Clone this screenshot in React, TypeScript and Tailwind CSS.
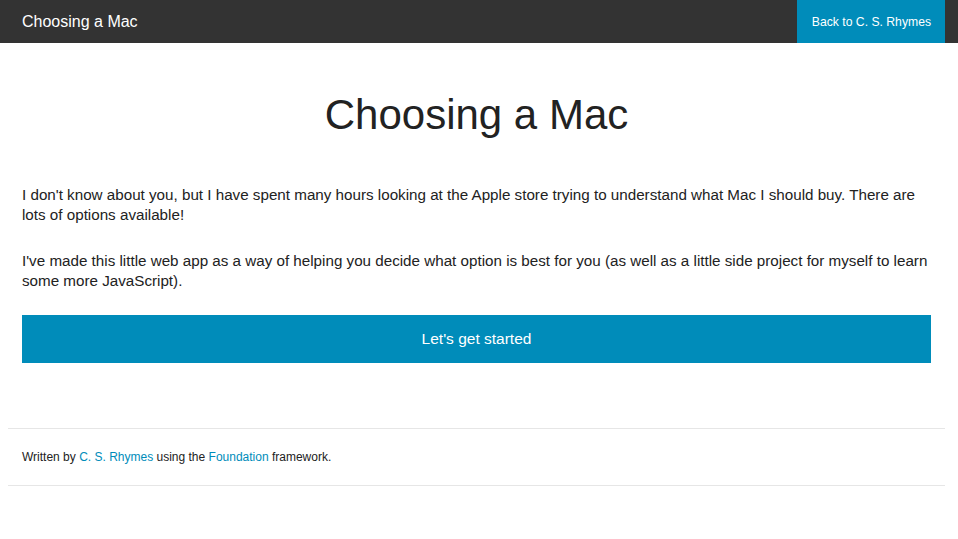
export default function App() {
  return (
    <div className="min-h-[539px] bg-white font-['Liberation_Sans',Arial,sans-serif] text-[#222]">
      <nav className="flex h-[43px] items-stretch justify-between bg-[#333] pl-[22px] pr-[13px]">
        <span className="self-center pt-[1px] text-[16px] text-white">Choosing a Mac</span>
        <a
          href="#"
          className="flex items-center bg-[#008cba] pl-[15px] pr-[14px] pt-[2px] text-[12.2px] text-white"
        >
          Back to C. S. Rhymes
        </a>
      </nav>

      <main className="ml-[8px] mr-[13px] px-[14px]">
        <h1 className="mt-[48px] text-center text-[42px] leading-[48px]">Choosing a Mac</h1>
        <p className="mt-[46px] text-[15.2px] leading-[20px]">
          I don't know about you, but I have spent many hours looking at the Apple store trying to
          understand what Mac I should buy. There are lots of options available!
        </p>
        <p className="mt-[26px] text-[15.2px] leading-[20px]">
          I've made this little web app as a way of helping you decide what option is best for you
          (as well as a little side project for myself to learn some more JavaScript).
        </p>
        <button className="mt-[24px] flex h-[48px] w-full items-center justify-center bg-[#008cba] text-[15.5px] text-white">
          Let's get started
        </button>
      </main>

      <footer className="ml-[8px] mr-[13px] mt-[65px] border-y border-[#e6e6e6] px-[14px] py-[20px]">
        <p className="text-[12px] leading-[16px] text-[#222]">
          Written by{" "}
          <a href="#" className="text-[#008cba]">
            C. S. Rhymes
          </a>{" "}
          using the{" "}
          <a href="#" className="text-[#008cba]">
            Foundation
          </a>{" "}
          framework.
        </p>
      </footer>
    </div>
  );
}
